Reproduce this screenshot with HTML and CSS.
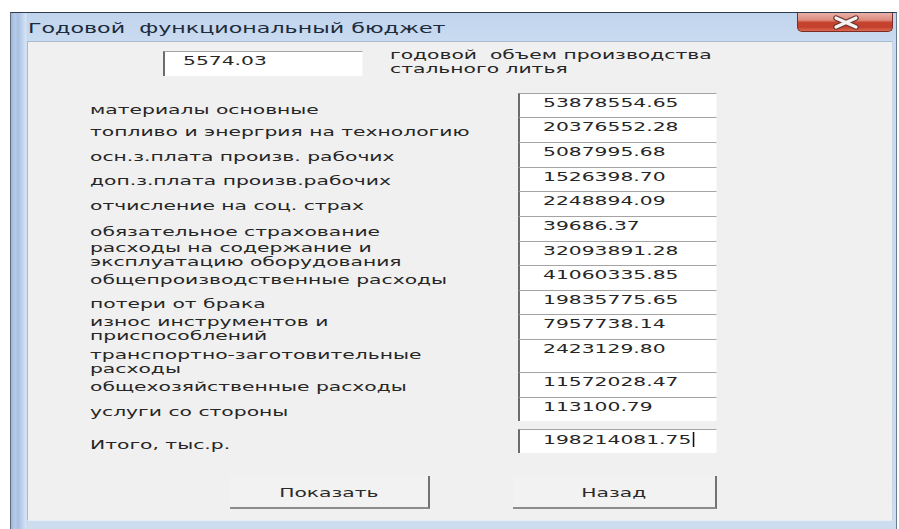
FILE: index.html
```html
<!DOCTYPE html>
<html lang="ru">
<head>
<meta charset="utf-8">
<title>Годовой функциональный бюджет</title>
<link rel="stylesheet" href="styles.css">
</head>
<body>
<div class="window">
  <div class="titlebar">
    <span class="title t">Годовой  функциональный бюджет</span>
    <div class="close">
      <svg width="96" height="19" viewBox="0 0 96 19">
        <path d="M39 5 L59 14 M59 5 L39 14" stroke="#6a332d" stroke-width="5.5" stroke-linecap="round" fill="none"/>
        <path d="M39 5 L59 14 M59 5 L39 14" stroke="#f6f2f1" stroke-width="3.2" stroke-linecap="round" fill="none"/>
      </svg>
    </div>
  </div>
  <div class="client">
    <div class="head">
      <div class="field big"><span class="t">5574.03</span></div>
      <div class="head-label"><span class="t">годовой  объем производства<br>стального литья</span></div>
    </div>

    <div class="rows">
      <div class="row h24"><div class="label p10"><span class="t">материалы основные</span></div><div class="field"><span class="t">53878554.65</span></div></div>
      <div class="row"><div class="label p8"><span class="t">топливо и энергрия на технологию</span></div><div class="field"><span class="t">20376552.28</span></div></div>
      <div class="row"><div class="label p8"><span class="t">осн.з.плата произв. рабочих</span></div><div class="field"><span class="t">5087995.68</span></div></div>
      <div class="row h24"><div class="label p7"><span class="t">доп.з.плата произв.рабочих</span></div><div class="field"><span class="t">1526398.70</span></div></div>
      <div class="row"><div class="label p8"><span class="t">отчисление на соц. страх</span></div><div class="field"><span class="t">2248894.09</span></div></div>
      <div class="row"><div class="label p9"><span class="t">обязательное страхование</span></div><div class="field"><span class="t">39686.37</span></div></div>
      <div class="row h24"><div class="label p0"><span class="t">расходы на содержание и<br>эксплуатацию оборудования</span></div><div class="field"><span class="t">32093891.28</span></div></div>
      <div class="row"><div class="label p8"><span class="t">общепроизводственные расходы</span></div><div class="field"><span class="t">41060335.85</span></div></div>
      <div class="row h24"><div class="label p7"><span class="t">потери от брака</span></div><div class="field"><span class="t">19835775.65</span></div></div>
      <div class="row"><div class="label p1"><span class="t">износ инструментов и<br>приспособлений</span></div><div class="field"><span class="t">7957738.14</span></div></div>
      <div class="row h33"><div class="label p9"><span class="t">транспортно-заготовительные<br>расходы</span></div><div class="field"><span class="t">2423129.80</span></div></div>
      <div class="row"><div class="label p8"><span class="t">общехозяйственные расходы</span></div><div class="field"><span class="t">11572028.47</span></div></div>
      <div class="row h24"><div class="label p8"><span class="t">услуги со стороны</span></div><div class="field"><span class="t">113100.79</span></div></div>
      <div class="row h24 total"><div class="label p9"><span class="t">Итого, тыс.р.</span></div><div class="field"><span class="t">198214081.75<span class="caret"></span></span></div></div>
    </div>

    <div class="buttons">
      <div class="btn show"><span class="t">Показать</span></div>
      <div class="btn back"><span class="t">Назад</span></div>
    </div>
  </div>
</div>
</body>
</html>
```
FILE: styles.css
```css
html, body {
  margin: 0;
  padding: 0;
}

body {
  background: #ffffff;
  font-family: "DejaVu Sans", Verdana, sans-serif;
  font-size: 13px;
  line-height: 14px;
  color: #232323;
  overflow: hidden;
}

/* text is drawn in a wide face: stretch each run horizontally */
.t {
  display: inline-block;
  white-space: pre;
  transform: scaleX(1.56);
  transform-origin: 0 0;
}

/* ---------- window frame ---------- */
.window {
  margin: 12px 0 0 10px;
  width: 887px;
  height: 517px;
  box-sizing: border-box;
  border-top: 1px solid #2e3c4e;
  border-left: 1px solid #5a6d84;
  border-right: 1px solid #6a7c92;
  display: flex;
  flex-direction: column;
  background:
    linear-gradient(to right, #9db5d7 0, #b8cce8 4px, #a9c0e2 7px, #c3d6ee 12px, #d8e4f3 15px, rgba(255,255,255,0) 16px),
    linear-gradient(to bottom, #c0d4ed 0, #c9dbf0 28px, #cddcee 100%);
}

.titlebar {
  height: 28px;
  display: flex;
  align-items: flex-start;
  flex: none;
}

.title {
  margin-left: 17px;
  margin-top: 7px;
  font-size: 14px;
  line-height: 16px;
  color: #1d2b3b;
  transform: scaleX(1.585);
}

.close {
  margin-left: auto;
  margin-right: 3px;
  width: 96px;
  height: 19px;
  box-sizing: border-box;
  border: 1px solid #7a2d26;
  border-top: none;
  border-radius: 0 0 5px 5px;
  background: linear-gradient(to bottom, #e9b0a8 0%, #dc8a7d 40%, #c6442f 52%, #c33f2c 78%, #dd6a50 100%);
  overflow: hidden;
}

.close svg {
  display: block;
  margin-left: -1px;
}

/* ---------- client area ---------- */
.client {
  flex: 1;
  margin: 0 3px 8px 16px;
  background: #f0f0f0;
  border: 1px solid #a9bad0;
  border-right-color: #c9d6e6;
  border-bottom-color: #e6edf5;
}

.head {
  display: flex;
  align-items: flex-start;
  padding: 6px 0 0 135px;
  height: 29px;
}

.field {
  width: 199px;
  box-sizing: border-box;
  background: #ffffff;
  border-left: 2px solid #6c6c6c;
  border-top: 1px solid #a4a4a4;
  border-right: 1px solid #f7f7f7;
  padding: 2px 0 0 23px;
  color: #262626;
}

.field.big {
  width: 200px;
  height: 25px;
  margin-top: 3px;
  padding-left: 18px;
}

.head-label {
  margin-left: 27px;
  color: #262626;
}

.rows {
  margin-top: 16px;
}

.row {
  display: flex;
  height: 25px;
}

.row.h24 { height: 24px; }
.row.h33 { height: 33px; }
.row.total { margin-top: 8px; }

.label {
  width: 490px;
  box-sizing: border-box;
  padding-left: 62px;
  color: #262626;
}

.p0 { padding-top: 0; }
.p1 { padding-top: 1px; }
.p7 { padding-top: 7px; }
.p8 { padding-top: 8px; }
.p9 { padding-top: 9px; }
.p10 { padding-top: 10px; }

.caret {
  display: inline-block;
  width: 1px;
  height: 15px;
  margin-left: 1px;
  vertical-align: -3px;
  background: #111111;
}

/* ---------- buttons ---------- */
.buttons {
  display: flex;
  margin-top: 23px;
  padding-left: 202px;
  gap: 83px;
}

.btn {
  height: 33px;
  box-sizing: border-box;
  border-right: 2px solid #727272;
  border-bottom: 2px solid #8c8c8c;
  background: #f2f2f2;
  display: flex;
  align-items: center;
  justify-content: center;
  padding-top: 2px;
  color: #2a2a2a;
}

.btn .t { transform-origin: 50% 50%; }

.btn.show { width: 200px; }
.btn.back { width: 204px; }
```
